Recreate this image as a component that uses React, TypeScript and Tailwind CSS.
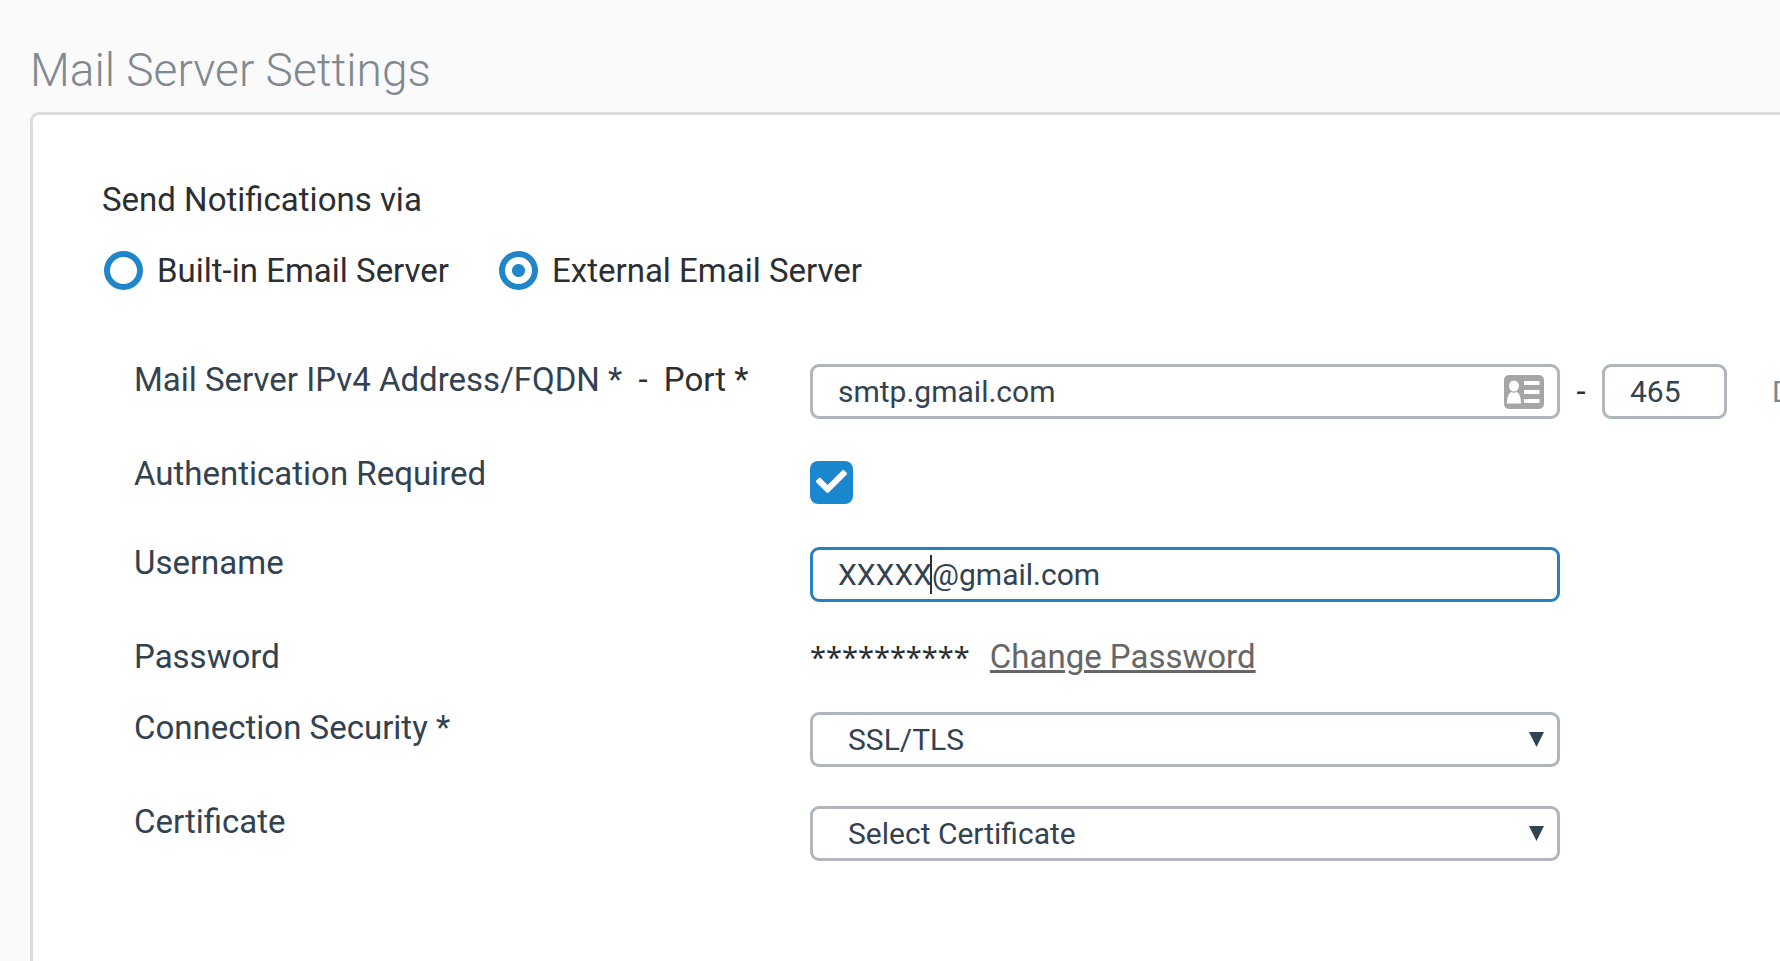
import React from 'react';
import { FaCheck } from 'react-icons/fa';

const fieldClass =
  'h-[55px] w-full appearance-none rounded-[9px] border-[3px] bg-white text-[30px] text-[#33424f] outline-none';

interface RowProps {
  label: React.ReactNode;
  htmlFor?: string;
  extra?: React.ReactNode;
  children: React.ReactNode;
}

const Row: React.FC<RowProps> = ({ label, htmlFor, extra, children }) => (
  <div className="grid grid-cols-[minmax(0,676fr)_minmax(0,750fr)_minmax(0,220fr)] items-start">
    <label htmlFor={htmlFor} className="whitespace-nowrap text-[#33424f]">
      {label}
    </label>
    <div className="relative">{children}</div>
    {extra}
  </div>
);

interface RadioProps {
  label: string;
  defaultChecked?: boolean;
}

const Radio: React.FC<RadioProps> = ({ label, defaultChecked }) => (
  <label className="flex items-center gap-3.5">
    <input
      type="radio"
      name="server"
      defaultChecked={defaultChecked}
      className="size-[39px] shrink-0 appearance-none rounded-full border-[6px] border-[#2186c8] bg-white checked:bg-[radial-gradient(circle,#2186c8_6px,white_7px)]"
    />
    {label}
  </label>
);

interface SelectProps {
  id: string;
  options: string[];
}

const Select: React.FC<SelectProps> = ({ id, options }) => (
  <>
    <select id={id} className={`${fieldClass} border-[#b0b6bc] pl-[35px] pr-12`}>
      {options.map((o) => (
        <option key={o}>{o}</option>
      ))}
    </select>
    <svg viewBox="0 0 15 15" className="pointer-events-none absolute right-4 top-5 size-[15px] fill-[#2f4452]">
      <path d="M0 0h15L7.5 15z" />
    </svg>
  </>
);

const ContactIcon = () => (
  <svg viewBox="0 0 40 34" className="pointer-events-none absolute right-4 top-[11px] h-[34px] w-10">
    <rect width="40" height="34" rx="5" fill="#a6a6a6" />
    <ellipse cx="10" cy="11" rx="5" ry="5.5" fill="#fff" />
    <path d="M3 28.500c0-6 1.500-10.500 4.500-11.500q2.500 1.600 5 0c3 1 4.500 5.500 4.500 11.500z" fill="#fff" />
    <path d="M20 8h15.500M20 17h15.500M20 26h15.500" stroke="#fff" strokeWidth="4" />
  </svg>
);

const App: React.FC = () => {
  return (
    <main className="flex min-h-screen flex-col overflow-x-hidden bg-[#fafafa] pl-[30px] pt-[42px] font-[Roboto,sans-serif] text-[33px] leading-8 text-[#2c2f31]">
      <h1 className="mb-3.5 text-[46px] font-light leading-[56px] text-[#808990]">Mail Server Settings</h1>

      <form className="flex-1 rounded-tl-[9px] border-l-[3px] border-t-[3px] border-[#dcdcdc] bg-white pb-20 pl-[69px] pt-[69px]">
        <fieldset>
          <legend>Send Notifications via</legend>
          <div className="flex flex-wrap gap-[50px] pl-0.5 pt-[35px]">
            <Radio label="Built-in Email Server" />
            <Radio label="External Email Server" defaultChecked />
          </div>
        </fieldset>

        <div className="flex flex-col gap-[39px] pl-8 pt-[74px]">
          <Row
            htmlFor="host"
            label={
              <>
                Mail Server IPv4 Address/FQDN * <span className="px-2 text-[#2c2f31]">-</span>{' '}
                <span className="text-[#2c2f31]">Port *</span>
              </>
            }
            extra={
              <div className="flex h-[55px] items-center overflow-hidden">
                <span className="w-[42px] shrink-0 text-center">-</span>
                <input
                  aria-label="Port"
                  defaultValue="465"
                  className={`${fieldClass} max-w-[125px] shrink-0 border-[#b0b6bc] px-[25px]`}
                />
                <span className="shrink-0 pl-[45px] text-[30px] text-[#808990]">D</span>
              </div>
            }
          >
            <input id="host" defaultValue="smtp.gmail.com" className={`${fieldClass} border-[#b0b6bc] pl-[25px] pr-16`} />
            <ContactIcon />
          </Row>

          <Row htmlFor="auth" label="Authentication Required">
            <div className="flex h-[50px] items-start pt-[3px]">
              <input
                id="auth"
                type="checkbox"
                defaultChecked
                className="size-[43px] appearance-none rounded-lg bg-white checked:bg-[#1b87cf]"
              />
              <FaCheck className="pointer-events-none absolute left-1.5 top-2 size-[31px] text-white" />
            </div>
          </Row>

          <Row htmlFor="username" label="Username">
            <input id="username" defaultValue="XXXXX@gmail.com" className={`${fieldClass} border-[#2780c0] px-[25px]`} />
            {/* text caret */}
            <span className="pointer-events-none absolute left-[120px] top-2 h-[39px] w-0.5 bg-[#2c2f31]" />
          </Row>

          <Row label="Password">
            <div className="flex gap-5 whitespace-nowrap">
              <span className="font-['Noto_Sans',sans-serif] text-[29px]">**********</span>
              <a href="#" className="text-[#666] underline decoration-[3px] underline-offset-2">
                Change Password
              </a>
            </div>
          </Row>

          <Row htmlFor="security" label="Connection Security *">
            <Select id="security" options={['SSL/TLS', 'STARTTLS', 'None']} />
          </Row>

          <Row htmlFor="certificate" label="Certificate">
            <Select id="certificate" options={['Select Certificate']} />
          </Row>
        </div>
      </form>
    </main>
  );
};

export default App;
